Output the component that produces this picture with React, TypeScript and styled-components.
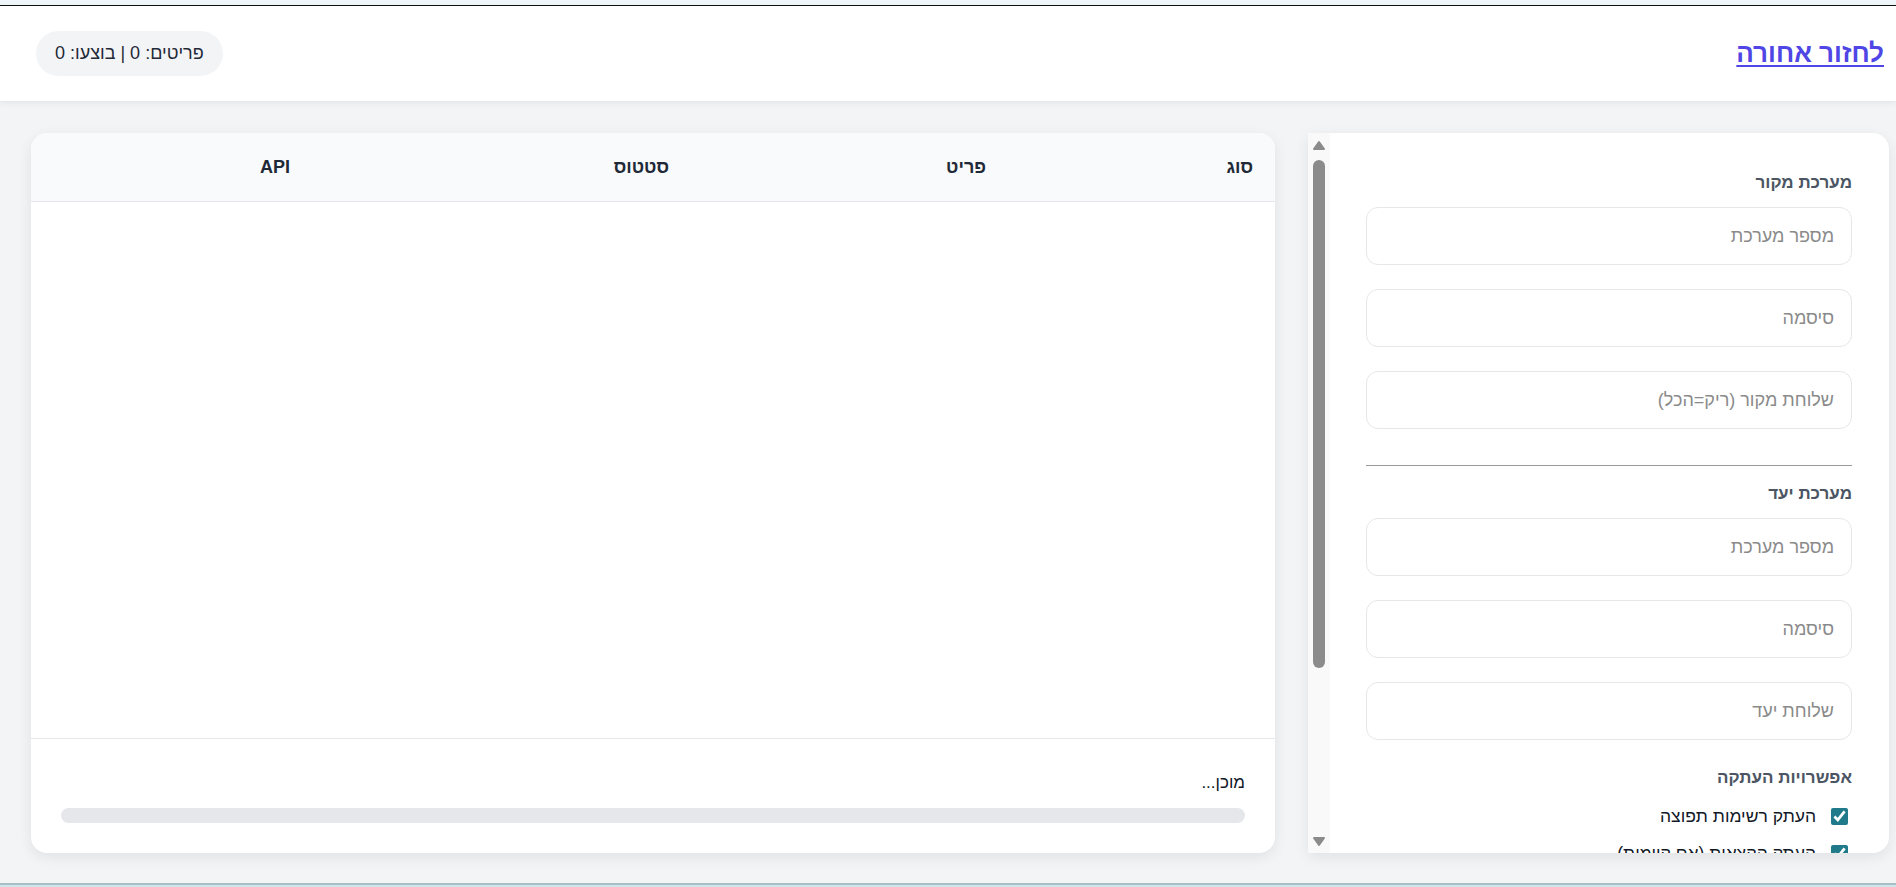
import styled, { createGlobalStyle } from "styled-components";

const GlobalStyle = createGlobalStyle`
	html, body {
		margin: 0;
		padding: 0;
	}
	body {
		font-family: "Liberation Sans", "DejaVu Sans", sans-serif;
		direction: rtl;
		background: #d0e5eb;
	}
	* {
		box-sizing: border-box;
	}
`;

const columns = ["סוג", "פריט", "סטטוס", "API"];

const sourceFields = ["מספר מערכת", "סיסמה", "שלוחת מקור (ריק=הכל)"];
const targetFields = ["מספר מערכת", "סיסמה", "שלוחת יעד"];
const copyOptions = [
	"העתק רשימות תפוצה",
	"העתק הקצאות (אם קיימות)",
	"העתק הגדרות שלוחה",
	"דלג על קיימים",
];

// little triangle used by the scroll rail
const RailArrow = ({ down }: { down?: boolean }) => (
	<svg width="14" height="11" viewBox="0 0 14 11">
		<path
			d={down ? "M2 2 L12 2 L7 9 Z" : "M2 9 L12 9 L7 2 Z"}
			fill="#8b8b8b"
			stroke="#8b8b8b"
			strokeWidth="2"
			strokeLinejoin="round"
		/>
	</svg>
);

const App = () => {
	return (
		<>
			<GlobalStyle />
			<Page>
				<TopEdge />
				<Header>
					<BackLink href="#">לחזור אחורה</BackLink>
					<Counter>פריטים: 0 | בוצעו: 0</Counter>
				</Header>
				<Main>
					<SidePanel>
						<PanelContent>
							<SectionTitle>מערכת מקור</SectionTitle>
							<FieldList>
								{sourceFields.map((f) => (
									<Field key={f} placeholder={f} type={f === "סיסמה" ? "password" : "text"} />
								))}
							</FieldList>
							<Divider />
							<SectionTitle>מערכת יעד</SectionTitle>
							<FieldList>
								{targetFields.map((f) => (
									<Field key={f} placeholder={f} type={f === "סיסמה" ? "password" : "text"} />
								))}
							</FieldList>
							<SectionTitle $top={26}>אפשרויות העתקה</SectionTitle>
							<OptionList>
								{copyOptions.map((o) => (
									<Option key={o}>
										<Check type="checkbox" defaultChecked />
										<span>{o}</span>
									</Option>
								))}
							</OptionList>
							<Button $primary>התחל העתקה</Button>
							<Button>בדוק חיבור</Button>
						</PanelContent>
						<ScrollRail>
							<RailArrow />
							<RailTrack>
								<RailThumb />
							</RailTrack>
							<RailArrow down />
						</ScrollRail>
					</SidePanel>

					<TableCard>
						<TableHead>
							{columns.map((c) => (
								<HeadCell key={c}>{c}</HeadCell>
							))}
						</TableHead>
						<TableBody />
						<TableFooter>
							<StatusText>מוכן...</StatusText>
							<Progress>
								<ProgressFill style={{ width: "0%" }} />
							</Progress>
						</TableFooter>
					</TableCard>
				</Main>
				<BottomEdge />
			</Page>
		</>
	);
};

const Page = styled.div`
	height: 100vh;
	display: flex;
	flex-direction: column;
	background: #f3f4f6;
`;

const TopEdge = styled.div`
	height: 6px;
	flex-shrink: 0;
	background: #eef6fa;
	border-bottom: 1px solid #111;
`;

const BottomEdge = styled.div`
	height: 4px;
	flex-shrink: 0;
	background: #d0e5eb;
	border-top: 2px solid #a9bfc6;
`;

const Header = styled.header`
	height: 95px;
	flex-shrink: 0;
	display: flex;
	align-items: center;
	justify-content: space-between;
	padding: 0 12px 0 36px;
	background: #fff;
	box-shadow: 0 2px 6px rgba(0, 0, 0, 0.07);
	position: relative;
	z-index: 2;
`;

const BackLink = styled.a`
	font-size: 26px;
	font-weight: 700;
	color: #4f46e5;
	text-decoration: underline;
	text-underline-offset: 3px;
`;

const Counter = styled.div`
	height: 45px;
	display: flex;
	align-items: center;
	padding: 0 19px;
	border-radius: 999px;
	background: #f3f4f6;
	color: #1f2937;
	font-size: 18px;
`;

const Main = styled.main`
	flex: 1;
	min-height: 0;
	display: flex;
	gap: 33px;
	padding: 32px 7px 30px 31px;
`;

const SidePanel = styled.aside`
	width: 581px;
	flex-shrink: 0;
	display: flex;
	background: #fff;
	border-radius: 0 16px 16px 0;
	box-shadow: 0 4px 14px rgba(0, 0, 0, 0.08);
	overflow: hidden;
`;

const PanelContent = styled.div`
	flex: 1;
	min-width: 0;
	display: flex;
	flex-direction: column;
	padding: 38px 37px 24px 36px;
	overflow: hidden;
`;

const ScrollRail = styled.div`
	width: 22px;
	flex-shrink: 0;
	display: flex;
	flex-direction: column;
	align-items: center;
	padding: 7px 0 6px;
	background: #f9f9f9;
`;

const RailTrack = styled.div`
	flex: 1;
	width: 100%;
	display: flex;
	justify-content: center;
	padding-top: 9px;
`;

const RailThumb = styled.div`
	width: 12px;
	height: 508px;
	border-radius: 6px;
	background: #8b8b8b;
`;

const SectionTitle = styled.h3<{ $top?: number }>`
	margin: ${(p) => p.$top ?? 0}px 0 12px;
	font-size: 17px;
	line-height: 24px;
	font-weight: 700;
	color: #4b5563;
`;

const FieldList = styled.div`
	display: flex;
	flex-direction: column;
	gap: 24px;
`;

const Field = styled.input`
	height: 58px;
	width: 100%;
	flex-shrink: 0;
	padding: 0 17px;
	border: 1px solid #e5e7eb;
	border-radius: 12px;
	font-family: inherit;
	font-size: 18px;
	color: #1f2937;
	background: #fff;
	outline: none;

	&::placeholder {
		color: #8a8a8a;
	}
`;

const Divider = styled.hr`
	width: 100%;
	margin: 36px 0 16px;
	border: 0;
	border-top: 1px solid #9a9a9a;
	flex-shrink: 0;
`;

const OptionList = styled.div`
	display: flex;
	flex-direction: column;
	gap: 13px;
	margin-top: 2px;
`;

const Option = styled.label`
	display: flex;
	align-items: center;
	gap: 15px;
	padding-right: 4px;
	font-size: 17.5px;
	line-height: 24px;
	font-weight: 500;
	color: #111827;
`;

const Check = styled.input`
	width: 17px;
	height: 17px;
	margin: 0;
	accent-color: #217a8a;
`;

const Button = styled.button<{ $primary?: boolean }>`
	height: 50px;
	margin-top: ${(p) => (p.$primary ? 24 : 12)}px;
	flex-shrink: 0;
	border: 0;
	border-radius: 12px;
	font-family: inherit;
	font-size: 18px;
	font-weight: 700;
	color: ${(p) => (p.$primary ? "#fff" : "#374151")};
	background: ${(p) => (p.$primary ? "#4f46e5" : "#e5e7eb")};
`;

const TableCard = styled.section`
	flex: 1;
	min-width: 0;
	display: flex;
	flex-direction: column;
	background: #fff;
	border-radius: 16px;
	box-shadow: 0 4px 14px rgba(0, 0, 0, 0.08);
	overflow: hidden;
`;

const TableHead = styled.div`
	height: 69px;
	flex-shrink: 0;
	display: grid;
	grid-template-columns: 267px 317px 379px 1fr;
	align-items: center;
	background: #f9fafb;
	border-bottom: 1px solid #e5e7eb;
`;

const HeadCell = styled.div`
	padding-right: 22px;
	font-size: 18px;
	font-weight: 700;
	color: #1f2937;
`;

const TableBody = styled.div`
	flex: 1;
`;

const TableFooter = styled.div`
	flex-shrink: 0;
	display: flex;
	flex-direction: column;
	gap: 13px;
	padding: 32px 30px 30px 30px;
	border-top: 1px solid #e5e7eb;
`;

const StatusText = styled.div`
	font-size: 17px;
	line-height: 24px;
	color: #111827;
`;

const Progress = styled.div`
	height: 15px;
	border-radius: 999px;
	background: #e5e7eb;
	overflow: hidden;
`;

const ProgressFill = styled.div`
	height: 100%;
	background: #4f46e5;
`;

export default App;
